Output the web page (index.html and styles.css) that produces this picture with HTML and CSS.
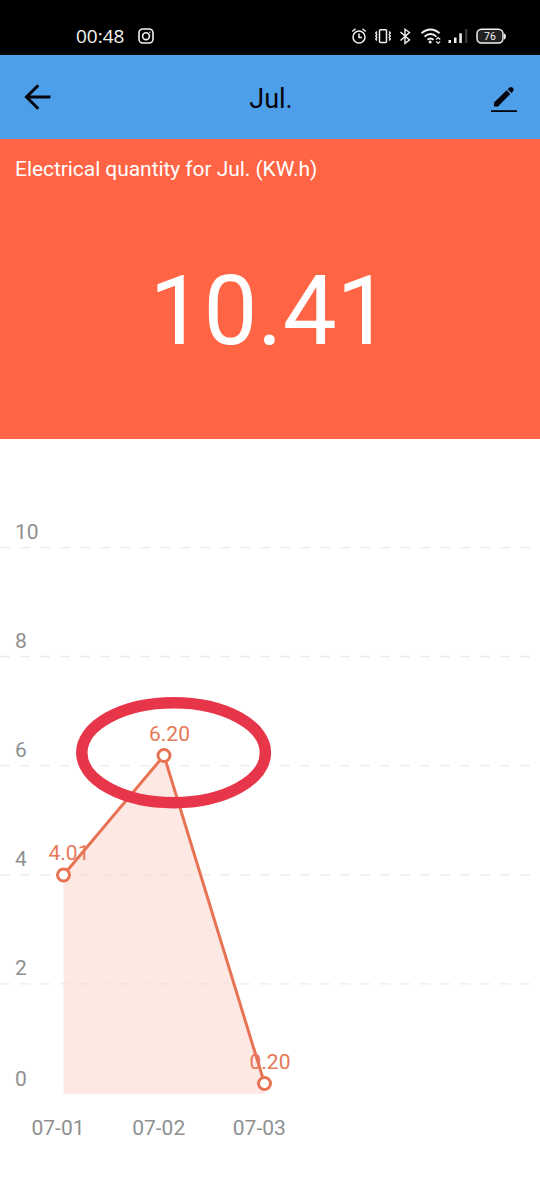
FILE: index.html
```html
<!DOCTYPE html>
<html lang="en">
<head>
<meta charset="utf-8">
<title>Jul.</title>
<link rel="stylesheet" href="styles.css">
</head>
<body>
<div class="status">
  <span class="clock">00:48</span>
  <svg class="insta" width="18" height="18" viewBox="0 0 18 18" fill="none" stroke="#f4f4f4" stroke-width="1.6"><rect x="2" y="2" width="14" height="14" rx="4"/><circle cx="9" cy="9.2" r="3.4"/><circle cx="12.8" cy="5.2" r=".7" fill="#f4f4f4" stroke="none"/></svg>
  <svg class="tray" width="160" height="22" viewBox="350 25 160 22" fill="none" stroke="#f2f2f2" stroke-width="1.5">
    <circle cx="359" cy="37" r="6"/><path d="M359 33.5v4h3M352.300 31.500l3.200-2.700M362.500 28.800l3.200 2.700"/>
    <rect x="379.500" y="29.800" width="7" height="12.600" rx="1"/>
    <path stroke-width="1.4" d="M376.800 31.500l-1 1.500 1 1.500-1 1.500 1 1.500-1 1.500 1 1.500M389.300 31.500l1 1.500-1 1.500 1 1.500-1 1.500 1 1.500-1 1.500"/>
    <path stroke-width="1.400" d="M400.500 32l9 8-4.500 3.300v-14l4.500 3.200-9 8"/>
    <path stroke-width="1.900" d="M421.500 33.200c5.500-5 12.500-5 18 0M424.500 36.600c3.700-3.200 8.300-3.200 12 0M427.500 39.700c1.900-1.600 4.100-1.600 6 0"/>
    <circle cx="430.200" cy="42" r="1.500" fill="#f2f2f2" stroke="none"/>
    <path stroke-width="1.200" d="M436.200 39.500l2-2 2 2M436.200 41.300l2 2 2-2"/>
    <g stroke="none" fill="#f2f2f2"><rect x="448.500" y="40" width="2.500" height="3"/><rect x="454" y="37.500" width="2.500" height="5.500"/><rect x="459.300" y="33.300" width="2.500" height="9.700"/><rect x="465" y="29" width="2.300" height="14" fill="#383838"/><path d="M504 33.500c2.500.3 2.500 5.700 0 6z"/></g>
    <rect x="477" y="29.300" width="26" height="13.700" rx="4.500" fill="#222"/>
    <text class="battery" x="490" y="40" text-anchor="middle">76</text>
  </svg>
</div>
<header class="bar">
  <svg class="back" width="28" height="28" viewBox="0 0 28 28" fill="none" stroke="#05060f" stroke-width="3"><path d="M15.300 2.200L3.500 14l11.800 11.800M3.500 14h24"/></svg>
  <h1 class="title">Jul.</h1>
  <svg class="edit" width="26" height="26" viewBox="0 0 26 26" fill="#05060f"><path d="M3 16.500L15.700 4.200l3.700 3.700L7 20.400H3z"/><path d="M16.700 3.200l1.700-1.700q1.700-1.200 3.300.2l.3.300q1.300 1.500 0 3.200L20.400 6.900z"/><rect x="0" y="24.200" width="26" height="1.800"/></svg>
</header>
<section class="summary">
  <p class="caption">Electrical quantity for Jul. (KW.h)</p>
  <p class="total">10.41</p>
</section>
<main>
  <svg class="chart" width="540" height="761" viewBox="0 439 540 761">
    <path class="grid" d="M0 547.700h530M0 656.500h530M0 765.600h530M0 874.800h530M0 983.800h530"/>
    <g class="axis">
      <text x="15" y="539">10</text><text x="15" y="648">8</text><text x="15" y="757">6</text><text x="15" y="866">4</text><text x="15" y="975">2</text><text x="15" y="1085.500">0</text>
      <text x="31.500" y="1135">07-01</text><text x="132.200" y="1135">07-02</text><text x="232.800" y="1135">07-03</text>
    </g>
    <path class="area" d="M63.500 875L164 755.500 264.500 1083.500V1094H63.500z"/>
    <g class="values"><text x="48.500" y="859.500">4.01</text><text x="149" y="740.500">6.20</text><text x="249.500" y="1068.500">0.20</text></g>
    <path class="line" d="M63.500 875L164 755.500 264.500 1083.500"/>
    <g class="points"><circle cx="63.500" cy="875" r="6"/><circle cx="164" cy="755.500" r="6"/><circle cx="264.500" cy="1083.500" r="6"/></g>
    <ellipse class="mark" cx="173.600" cy="752.700" rx="91.800" ry="50"/>
  </svg>
</main>
</body>
</html>
```
FILE: styles.css
```css
* { box-sizing: border-box; margin: 0; }
body { width: 540px; height: 1200px; background: #fff; font-family: Roboto, sans-serif; overflow: hidden; }
svg { display: block; flex: none; }
.status { display: flex; align-items: flex-start; height: 55px; padding: 25px 30px 0 76px; background: #000; }
.clock { width: 61px; font: 19px/22px "Open Sans", sans-serif; color: #f4f4f4; }
.insta { margin-top: 2px; }
.tray { margin-left: auto; }
.battery { font: 10.5px Roboto, sans-serif; fill: #f2f2f2; stroke: none; }
.bar { display: grid; grid-template-columns: 28px 1fr 26px; align-items: center; height: 84px; padding: 0 23px; background: #4e9fe9; }
.title { font-size: 27px; font-weight: 400; line-height: 32px; text-align: center; color: #05060f; padding-top: 4px; }
.edit { margin-top: 3px; }
.summary { height: 300px; padding: 18px 15px 0; background: #ff6444; color: #fff; }
.caption { font-size: 21px; line-height: 25px; letter-spacing: -.06px; }
.total { margin-top: 73px; font-size: 96px; line-height: 112px; text-align: center; }
.grid { stroke: #ececec; stroke-width: 1.3; stroke-dasharray: 10 10; }
.axis { font-size: 21px; fill: #8e9090; }
.values { font-size: 21px; fill: #e57858; }
.area { fill: #fbd1c9; fill-opacity: .5; }
.line { fill: none; stroke: #e87354; stroke-width: 3; }
.points { fill: #fff; stroke: #e87354; stroke-width: 3; }
.mark { fill: none; stroke: #e73649; stroke-width: 11.5; }
```
